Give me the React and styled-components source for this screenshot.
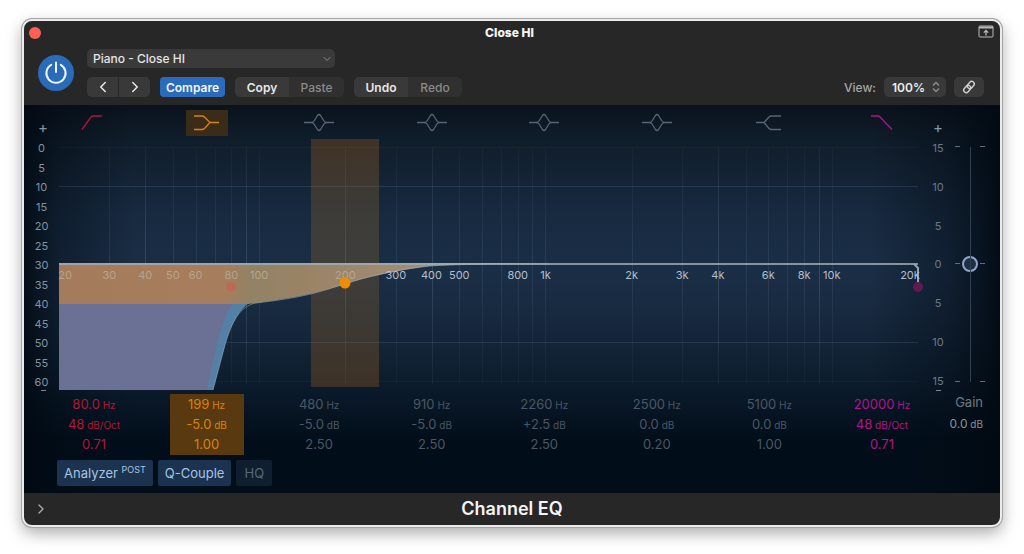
import React, { useState } from 'react'
import styled, { createGlobalStyle } from 'styled-components'
import { FiChevronDown, FiChevronLeft, FiChevronRight } from 'react-icons/fi'

const PLOT_W = 859
const PLOT_H = 251
const ZERO_Y = 125

const grid = [
  30, 40, 50, 60, 70, 80, 90,
  100, 200, 300, 400, 500, 600, 700, 800, 900,
  1000, 2000, 3000, 4000, 5000, 6000, 7000, 8000, 9000, 10000
]

const strongLines = [40, 90, 200, 400, 4000, 9000]

const freqLabels = [
  [20, '20'], [30, '30'], [40, '40'], [50, '50'], [60, '60'], [80, '80'], [100, '100'],
  [200, '200'], [300, '300'], [400, '400'], [500, '500'], [800, '800'], [1000, '1k'],
  [2000, '2k'], [3000, '3k'], [4000, '4k'], [6000, '6k'], [8000, '8k'], [10000, '10k'], [20000, '20k']
]

const analyzerScale = [0, 5, 10, 15, 20, 25, 30, 35, 40, 45, 50, 55, 60]
const gainScale = [15, 10, 5, 0, 5, 10, 15]

const bands = [
  { type: 'lowCut', name: 'Low cut', color: '#b01639', rows: [['80.0', 'Hz'], ['48', 'dB/Oct'], ['0.71']] },
  { type: 'lowShelf', name: 'Low shelf', color: '#d8820c', rows: [['199', 'Hz'], ['-5.0', 'dB'], ['1.00']] },
  { type: 'bell', name: 'Parametric 1', rows: [['480', 'Hz'], ['-5.0', 'dB'], ['2.50']] },
  { type: 'bell', name: 'Parametric 2', rows: [['910', 'Hz'], ['-5.0', 'dB'], ['2.50']] },
  { type: 'bell', name: 'Parametric 3', rows: [['2260', 'Hz'], ['+2.5', 'dB'], ['2.50']] },
  { type: 'bell', name: 'Parametric 4', rows: [['2500', 'Hz'], ['0.0', 'dB'], ['0.20']] },
  { type: 'highShelf', name: 'High shelf', rows: [['5100', 'Hz'], ['0.0', 'dB'], ['1.00']] },
  { type: 'highCut', name: 'High cut', color: '#b3138a', rows: [['20000', 'Hz'], ['48', 'dB/Oct'], ['0.71']] }
]

const shapes = {
  lowCut: 'M9 19.500 L18 7 Q19 6 20.500 6 H29',
  lowShelf: 'M8 6 H16 Q17.500 6 18.500 7 L24 12.500 L18.500 18.500 Q17.500 19.500 16 19.500 H8 M24 12.500 H33',
  bell: 'M6 12.500 H13 Q15 12.500 16 11 L19.500 5.500 Q21 3.500 22.500 5.500 L26 11 Q27 12.500 29 12.500 H36 M13 12.500 Q15 12.500 16 14 L19.500 19.500 Q21 21.500 22.500 19.500 L26 14 Q27 12.500 29 12.500',
  highShelf: 'M8 12.500 H16 L21 7 Q22 6 23.500 6 H33 M16 12.500 L21 18.500 Q22 19.500 23.500 19.500 H33',
  highCut: 'M10 6 H17 Q18 6 19 7 L31 19.500'
}

// 20 Hz - 20 kHz, three decades over the plot width
const freqX = (f) => (Math.log10(f / 20) / 3) * PLOT_W

const labelX = (f) => {
  if (f === 20) return 6
  if (f === 20000) return PLOT_W - 8
  return freqX(f)
}

function Plot() {
  return (
    <PlotSvg viewBox={`0 0 ${PLOT_W} ${PLOT_H}`} role="img" aria-label="Equalizer curve">
      <defs>
        <linearGradient id="fade" x1="0" y1="0" x2="0" y2="1">
          <stop offset="0" stopColor="#7393ad" stopOpacity="0.3" />
          <stop offset="0.5" stopColor="#7393ad" stopOpacity="0.9" />
          <stop offset="1" stopColor="#7393ad" stopOpacity="0.3" />
        </linearGradient>
        <linearGradient id="shelf" x1="0" y1="0" x2="1" y2="0">
          <stop offset="0" stopColor="#a57c5b" />
          <stop offset="0.34" stopColor="#a57e5d" />
          <stop offset="0.39" stopColor="#928265" />
          <stop offset="0.5" stopColor="#9a8365" />
          <stop offset="0.7" stopColor="#a08c72" />
          <stop offset="1" stopColor="#ac9c86" />
        </linearGradient>
        <linearGradient id="band" x1="0" y1="0" x2="0" y2="1">
          <stop offset="0" stopColor="#b0641c" stopOpacity="0.3" />
          <stop offset="0.3" stopColor="#8c6228" stopOpacity="0.32" />
          <stop offset="0.7" stopColor="#8c5c20" stopOpacity="0.32" />
          <stop offset="1" stopColor="#b0641c" stopOpacity="0.3" />
        </linearGradient>
      </defs>

      {grid.map((f) => (
        <rect
          key={f} x={Math.round(freqX(f))} y="8" width="1" height="237"
          fill="url(#fade)" opacity={strongLines.includes(f) ? 0.3 : 0.17}
        />
      ))}
      {[8, 47, 203, 242].map((y) => (
        <rect key={y} x="0" y={y} width={PLOT_W} height="1" fill="#7393ad" opacity={y === 8 || y === 242 ? 0.06 : 0.2} />
      ))}

      <rect x="252" y="0" width="68" height="248" fill="url(#band)" />

      {/* low cut */}
      <path d="M0 164 H174 L190 164 C181 170 172 184 166 206 L154 251 H0 Z" fill="#5580a5" />
      <path d="M0 164 H174 C168 172 162 188 157 210 L148 251 H0 Z" fill="#6b7195" />
      {/* low shelf */}
      <path
        d="M0 124 H490 C440 125 400 125 371 127 C345 130 330 134 310 138 C290 143 270 151 241 157 C220 161 205 163 189 165 H0 Z"
        fill="url(#shelf)"
      />
      <path
        d="M154 251 L166 206 C173 182 181 167 197 164 C215 162 235 159 252 155 C275 149 290 143 310 138 C330 133 345 130 371 127 C400 125 440 125 490 125"
        fill="none" stroke="#a9bdce" strokeOpacity="0.5"
      />
      <rect x="0" y="124" width={PLOT_W} height="2" fill="#a3adb8" opacity="0.8" />
      <path d="M855 125 L859 129 V148" fill="none" stroke="#97a3b1" strokeWidth="2" />

      {freqLabels.map(([f, text]) => (
        <FreqLabel key={f} x={labelX(f)} y="140" $dim={f <= 200}>{text}</FreqLabel>
      ))}

      <circle cx="172" cy="148" r="5" fill="#bd6a54" />
      <circle cx="286" cy={ZERO_Y + 19} r="5.5" fill="#f08c02" />
      <circle cx="859" cy="148" r="5" fill="#611a50" />
    </PlotSvg>
  )
}

function App() {
  const [gain, setGain] = useState(0)
  const [active, setActive] = useState(1)

  return (
    <>
    <GlobalStyle />
    <PluginWindow>
      <TitleBar>
        <CloseButton aria-label="Close" />
        <Title>Close HI</Title>
        <PlainButton aria-label="Detach">
          <svg width="16" height="13" viewBox="0 0 16 13" fill="none" stroke="#b9b9b9">
            <rect x="1" y="1" width="14" height="11" rx="1" />
            <path d="M1 2.500 H15" strokeWidth="2" />
            <path d="M8 10.500 V6 M5.800 7.600 L8 5.400 L10.200 7.600" strokeWidth="1.3" />
          </svg>
        </PlainButton>
      </TitleBar>

      <Controls>
        <PowerButton aria-label="Power">
          <svg width="24" height="24" viewBox="0 0 24 24" fill="none" stroke="#eef4fb" strokeWidth="2" strokeLinecap="round">
            <path d="M12 1.500 V11" />
            <path d="M7.200 3.800 A9.600 9.600 0 1 0 16.800 3.800" />
          </svg>
        </PowerButton>
        <ControlRows>
          <PresetBox>
            <PresetSelect aria-label="Preset" defaultValue="hi">
              <option value="hi">Piano - Close HI</option>
            </PresetSelect>
            <FiChevronDown size={12} />
          </PresetBox>
          <ButtonRow>
            <Segment>
              <ToolButton $w={31} aria-label="Previous preset"><FiChevronLeft size={18} /></ToolButton>
              <ToolButton $w={32} $line aria-label="Next preset"><FiChevronRight size={18} /></ToolButton>
            </Segment>
            <CompareButton>Compare</CompareButton>
            <Segment>
              <ToolButton $w={54}>Copy</ToolButton>
              <ToolButton $w={55} disabled>Paste</ToolButton>
            </Segment>
            <Segment>
              <ToolButton $w={54}>Undo</ToolButton>
              <ToolButton $w={54} disabled>Redo</ToolButton>
            </Segment>
            <ViewGroup>
              <ViewLabel htmlFor="view">View:</ViewLabel>
              <ViewBox>
                <ViewSelect id="view" defaultValue="100">
                  <option value="100">100%</option>
                </ViewSelect>
                <svg width="8" height="12" viewBox="0 0 8 12" fill="none" stroke="#8b8b8b" strokeWidth="1.5">
                  <path d="M1 4.500 L4 1.500 L7 4.500 M1 7.500 L4 10.500 L7 7.500" />
                </svg>
              </ViewBox>
              <LinkButton aria-label="Link">
                <svg width="14" height="14" viewBox="0 0 14 14" fill="none" stroke="#d0d0d0" strokeWidth="1.4">
                  <rect x="-4" y="-2.5" width="8" height="5" rx="2.5" transform="translate(8.8 5) rotate(-50)" />
                  <rect x="-4" y="-2.5" width="8" height="5" rx="2.5" transform="translate(5.2 9) rotate(-50)" />
                </svg>
              </LinkButton>
            </ViewGroup>
          </ButtonRow>
        </ControlRows>
      </Controls>

      <Panel>
        <Sign>+</Sign>
        <BandRow>
          {bands.map((b, i) => (
            <BandCell key={b.name}>
              <BandButton aria-label={b.name} $on={i === active} onClick={() => setActive(i)}>
                <svg width="42" height="26" viewBox="0 0 42 26" fill="none" stroke={b.color || '#586673'} strokeWidth="1.3">
                  <path d={shapes[b.type]} />
                </svg>
              </BandButton>
            </BandCell>
          ))}
        </BandRow>
        <Sign>+</Sign>
        <span />

        <Scale>
          {analyzerScale.map((n) => <span key={n}>{n}</span>)}
        </Scale>
        <Plot />
        <Scale $right>
          {gainScale.map((n, i) => <span key={i}>{n}</span>)}
        </Scale>
        <GainTrack>
          <GainSlider
            type="range" id="gain" min="-15" max="15" step="0.1"
            value={gain}
            onChange={(e) => setGain(Number(e.target.value))}
          />
          <svg width="30" height="251" viewBox="0 0 30 251" stroke="#5d6f7e">
            <path d="M15.500 8 V243" stroke="#2f414f" />
            <path d="M0 7.500 H5 M25 7.500 H30 M0 124.500 H5 M25 124.500 H30 M0 242.500 H5 M25 242.500 H30" />
          </svg>
        </GainTrack>

        <Minus />
        <BandRow>
          {bands.map((b, i) => (
            <Values key={b.name} $color={b.color} $on={i === active}>
              {b.rows.map(([num, unit], r) => (
                <p key={r}>{num}{unit && <Unit> {unit}</Unit>}</p>
              ))}
            </Values>
          ))}
        </BandRow>
        <GainInfo>
          <Minus $right />
          <label htmlFor="gain">Gain</label>
          <output htmlFor="gain">{gain.toFixed(1)}<Unit> dB</Unit></output>
        </GainInfo>

        <Modes>
          <ModeButton $on>Analyzer <sup>POST</sup></ModeButton>
          <ModeButton $on>Q-Couple</ModeButton>
          <ModeButton>HQ</ModeButton>
        </Modes>
      </Panel>

      <Footer>
        <PlainButton aria-label="Show details"><FiChevronRight size={16} /></PlainButton>
        <PluginName>Channel EQ</PluginName>
      </Footer>
    </PluginWindow>
    </>
  )
}

export default App

const GlobalStyle = createGlobalStyle`
  * {
    box-sizing: border-box;
  }

  body {
    margin: 0;
    background: #fff;
    font-family: Inter, "Liberation Sans", sans-serif;
    font-size: 13px;
  }

  button, select {
    margin: 0;
    padding: 0;
    border: 0;
    background: none;
    color: inherit;
    font: inherit;
  }

  h1, h2, p {
    margin: 0;
  }

  svg {
    display: block;
  }
`

const PluginWindow = styled.main`
  margin: 19px 22px 24px;
  border: 2px solid #ececec;
  border-radius: 10px;
  background: #272727;
  box-shadow: 0 0 0 1px #a4a4a4, 0 6px 16px rgba(0, 0, 0, 0.34);
  overflow: hidden;
`

const TitleBar = styled.header`
  display: grid;
  grid-template-columns: 28px 1fr 32px;
  align-items: center;
  height: 24px;
  padding: 0 6px 0 5px;

  button:last-child {
    justify-self: end;
    margin-bottom: 4px;
  }
`

const CloseButton = styled.button`
  width: 12px;
  height: 12px;
  border-radius: 50%;
  background: #fe5f57;
`

const Title = styled.h1`
  color: #f4f4f4;
  font-size: 12px;
  font-weight: 800;
  line-height: 16px;
  text-align: center;
`

const PlainButton = styled.button`
  display: flex;
  color: #a8a8a8;
`

const Controls = styled.section`
  display: flex;
  align-items: center;
  gap: 13px;
  padding: 4px 16px 8px 14px;
`

const PowerButton = styled.button`
  display: flex;
  align-items: center;
  justify-content: center;
  flex: none;
  width: 36px;
  height: 36px;
  border-radius: 50%;
  background: #2a6bb8;
`

const ControlRows = styled.div`
  display: flex;
  flex-direction: column;
  flex: 1;
  gap: 9px;
`

const PresetBox = styled.div`
  position: relative;
  width: 248px;

  svg {
    position: absolute;
    top: 4px;
    right: 2px;
    color: #8c8c8c;
    pointer-events: none;
  }
`

const PresetSelect = styled.select`
  display: block;
  width: 100%;
  height: 19px;
  padding: 0 6px;
  border-radius: 5px;
  appearance: none;
  background: #3a3a3a;
  color: #e6e6e6;
  font-size: 12px;
  font-weight: 500;
`

const ButtonRow = styled.div`
  display: flex;
  gap: 10px;
  height: 20px;
`

const Segment = styled.div`
  display: flex;
  border-radius: 5px;
  overflow: hidden;
`

const ToolButton = styled.button`
  display: flex;
  align-items: center;
  justify-content: center;
  width: ${(p) => p.$w}px;
  border-left: ${(p) => (p.$line ? '1px solid #282828' : '0')};
  background: #393939;
  color: #e8e8e8;
  font-size: 12px;
  font-weight: 600;

  &:disabled {
    background: #303030;
    color: #8a8a8a;
    font-weight: 500;
  }
`

const CompareButton = styled.button`
  width: 65px;
  border-radius: 4px;
  background: #2a6cbb;
  color: #f2f6fb;
  font-size: 12px;
  font-weight: 600;
`

const ViewGroup = styled.div`
  display: flex;
  align-items: center;
  gap: 8px;
  margin-left: auto;
`

const ViewLabel = styled.label`
  color: #a6a6a6;
  font-size: 12px;
  font-weight: 500;
`

const ViewBox = styled.div`
  position: relative;

  svg {
    position: absolute;
    top: 4px;
    right: 6px;
    pointer-events: none;
  }
`

const ViewSelect = styled.select`
  display: block;
  width: 62px;
  height: 20px;
  padding-left: 8px;
  border-radius: 5px;
  appearance: none;
  background: #393939;
  color: #ececec;
  font-size: 12px;
  font-weight: 600;
`

const LinkButton = styled.button`
  display: flex;
  align-items: center;
  justify-content: center;
  width: 30px;
  height: 20px;
  border-radius: 5px;
  background: #393939;
`

const Panel = styled.section`
  display: grid;
  grid-template-columns: 35px 1fr 37px 30px;
  grid-template-rows: 29px auto auto auto;
  padding: 5px 15px 7px 0;
  background:
    linear-gradient(90deg, rgba(1, 9, 17, 0.85) 0, rgba(1, 9, 17, 0.4) 35px, rgba(1, 9, 17, 0) 110px, rgba(1, 9, 17, 0) calc(100% - 130px), rgba(1, 9, 17, 0.4) calc(100% - 50px), rgba(1, 9, 17, 0.9) 100%),
    linear-gradient(#0a131c 0, #101d2b 35px, #172a40 110px, #1a2e46 165px, #182a40 205px, #0f2031 262px, #0a1929 290px, #010e1a 335px);
`

const Sign = styled.span`
  align-self: end;
  padding: 0 0 3px 3px;
  color: #8796a3;
  font-size: 15px;
  line-height: 16px;
  text-align: center;
`

const BandRow = styled.div`
  display: flex;
  justify-content: space-between;
  margin: 0 -1px 0 -2px;
`

const BandCell = styled.div`
  display: flex;
  justify-content: center;
  width: 74px;
`

const BandButton = styled.button`
  height: 26px;
  background: ${(p) => (p.$on ? '#3b2c1a' : 'none')};
`

const Scale = styled.div`
  display: flex;
  flex-direction: column;
  justify-content: space-between;
  padding: ${(p) => (p.$right ? '2px 0 2px 3px' : '2px 0 1px')};
  color: ${(p) => (p.$right ? '#6b7a88' : '#8593a0')};
  font-size: 11px;
  line-height: 14px;
  text-align: center;
`

const PlotSvg = styled.svg`
  width: 100%;
  overflow: visible;
`

const FreqLabel = styled.text`
  fill: ${(p) => (p.$dim ? '#c3b4a3' : '#b4bfca')};
  fill-opacity: ${(p) => (p.$dim ? 0.7 : 1)};
  font-size: 11px;
  text-anchor: middle;
`

const GainTrack = styled.div`
  position: relative;

  svg {
    position: absolute;
    inset: 0;
    pointer-events: none;
  }
`

const GainSlider = styled.input`
  display: block;
  width: 30px;
  height: 249px;
  margin: 0;
  appearance: none;
  background: none;
  writing-mode: vertical-lr;
  direction: rtl;

  &::-webkit-slider-thumb {
    width: 16px;
    height: 16px;
    border: 2px solid #92a6c4;
    border-radius: 50%;
    appearance: none;
    background: #1c2f47;
  }
`

const Minus = styled.span`
  justify-self: center;
  width: 5px;
  height: 1px;
  margin-left: ${(p) => (p.$right ? '0' : '3px')};
  background: #7c8a96;
`

const Values = styled.div`
  width: 74px;
  margin-top: 4px;
  padding-bottom: 1px;
  background: ${(p) => (p.$on ? '#593a10' : 'none')};
  color: ${(p) => p.$color || '#4a5764'};
  font-size: 13px;
  line-height: 20px;
  text-align: center;
  white-space: nowrap;
`

const Unit = styled.small`
  font-size: 10px;
  line-height: 1;
`

const GainInfo = styled.div`
  display: flex;
  flex-direction: column;
  grid-column: 3 / 5;
  padding-right: 2px;
  color: #8593a0;
  font-size: 12px;
  line-height: 22px;
  text-align: right;

  label {
    color: #6c7a87;
    font-size: 13px;
  }

  ${Minus} {
    align-self: flex-start;
    margin-left: 18px;
  }
`

const Modes = styled.div`
  display: flex;
  grid-column: 1 / -1;
  gap: 5px;
  padding: 5px 0 0 33px;
`

const ModeButton = styled.button`
  height: 26px;
  min-width: 36px;
  padding: 0 7px;
  border-radius: 2px;
  background: ${(p) => (p.$on ? '#1c3350' : '#101f2f')};
  color: ${(p) => (p.$on ? '#a5c4e4' : '#566879')};
  font-size: 13px;

  sup {
    font-size: 9px;
    line-height: 1;
  }
`

const Footer = styled.footer`
  display: grid;
  grid-template-columns: 32px 1fr 32px;
  align-items: center;
  height: 32px;
  padding: 0 9px;
`

const PluginName = styled.h2`
  color: #f4f4f4;
  font-size: 18px;
  font-weight: 600;
  line-height: 24px;
  text-align: center;
`
